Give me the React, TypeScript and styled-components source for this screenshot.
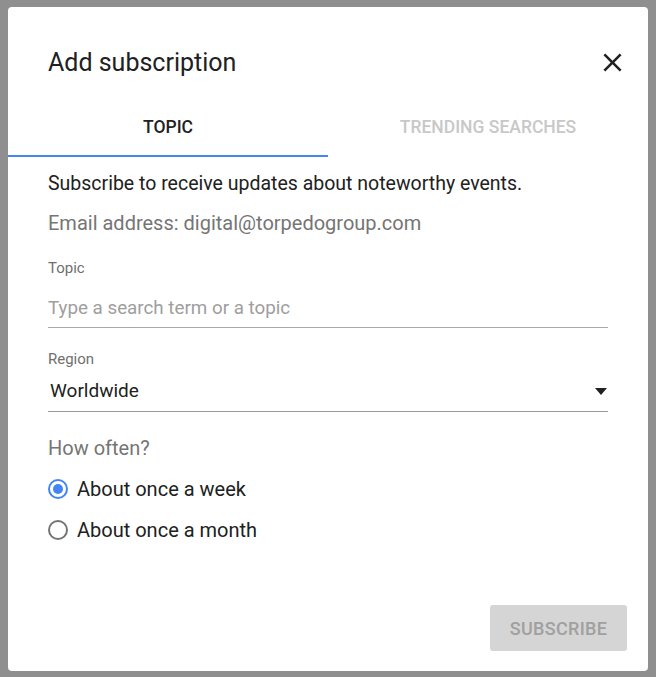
import React, { useState } from 'react';
import styled, { createGlobalStyle } from 'styled-components';

const GlobalStyle = createGlobalStyle`
  html, body {
    margin: 0;
    padding: 0;
    background: #8f8f8f;
    font-family: Roboto, "Liberation Sans", Arial, sans-serif;
  }
  * {
    box-sizing: border-box;
  }
`;

const Backdrop = styled.div`
  width: 656px;
  height: 677px;
  padding: 7px 8px 6px 8px;
`;

const Dialog = styled.div`
  width: 640px;
  height: 664px;
  background: #fff;
  border-radius: 4px;
  display: flex;
  flex-direction: column;
`;

const Header = styled.div`
  display: flex;
  align-items: center;
  justify-content: space-between;
  padding: 40px 20px 0 40px;
`;

const Title = styled.h2`
  margin: 0;
  font-size: 25px;
  line-height: 30px;
  font-weight: 400;
  color: #212121;
`;

const CloseButton = styled.button`
  width: 31px;
  height: 31px;
  padding: 0;
  border: 0;
  background: none;
  color: #212121;
  cursor: pointer;
  display: flex;
  align-items: center;
  justify-content: center;
`;

const Tabs = styled.div`
  display: flex;
  margin-top: 29px;
`;

const Tab = styled.div<{ $active?: boolean }>`
  flex: 1;
  text-align: center;
  padding: 10px 0 18px;
  font-size: 17.5px;
  line-height: 20px;
  font-weight: 500;
  text-transform: uppercase;
  color: ${({ $active }) => ($active ? '#212121' : '#c8c8c8')};
  border-bottom: 2px solid ${({ $active }) => ($active ? '#4285f4' : 'transparent')};
  cursor: pointer;
`;

const Body = styled.div`
  flex: 1;
  padding: 0 40px;
  display: flex;
  flex-direction: column;
`;

const Text = styled.p<{ $muted?: boolean; $top: number; $size?: number }>`
  margin: ${({ $top }) => $top}px 0 0;
  font-size: ${({ $size }) => $size ?? 20}px;
  line-height: 24px;
  color: ${({ $muted }) => ($muted ? '#757575' : '#212121')};
`;

const Field = styled.div<{ $top: number }>`
  margin-top: ${({ $top }) => $top}px;
  display: flex;
  flex-direction: column;
`;

const Label = styled.label`
  font-size: 15px;
  line-height: 20px;
  color: #6f6f6f;
`;

const Input = styled.input`
  margin-top: 18px;
  height: 32px;
  padding: 0 0 7px;
  border: 0;
  border-bottom: 1px solid #a8a8a8;
  outline: none;
  font-family: inherit;
  font-size: 18.8px;
  line-height: 24px;
  color: #212121;
  &::placeholder {
    color: #9e9e9e;
  }
`;

const Select = styled.div`
  margin-top: 10px;
  height: 33px;
  padding: 0 0 8px 2px;
  border-bottom: 1px solid #9a9a9a;
  display: flex;
  align-items: center;
  justify-content: space-between;
  font-size: 19px;
  line-height: 24px;
  color: #212121;
  cursor: pointer;
`;

const Caret = styled.span`
  width: 0;
  height: 0;
  margin-right: 1px;
  border-left: 6px solid transparent;
  border-right: 6px solid transparent;
  border-top: 7px solid #212121;
`;

const Options = styled.div`
  margin-top: 17px;
  display: flex;
  flex-direction: column;
  gap: 17px;
`;

const Option = styled.label`
  display: flex;
  align-items: center;
  gap: 9px;
  font-size: 20px;
  line-height: 24px;
  color: #212121;
  cursor: pointer;
`;

const Radio = styled.span<{ $checked: boolean }>`
  width: 20px;
  height: 20px;
  border-radius: 50%;
  border: 2px solid ${({ $checked }) => ($checked ? '#4285f4' : '#757575')};
  display: flex;
  align-items: center;
  justify-content: center;
  &::after {
    content: '';
    width: 10px;
    height: 10px;
    border-radius: 50%;
    background: ${({ $checked }) => ($checked ? '#4285f4' : 'transparent')};
  }
`;

const Footer = styled.div`
  display: flex;
  justify-content: flex-end;
  padding: 0 21px 20px;
`;

const SubmitButton = styled.button`
  width: 137px;
  height: 46px;
  border: 0;
  border-radius: 3px;
  background: #d5d5d5;
  color: #a0a0a0;
  font-family: inherit;
  font-size: 18px;
  font-weight: 500;
  letter-spacing: 0.3px;
  text-transform: uppercase;
`;

const CloseIcon = () => (
  <svg width="31" height="31" viewBox="0 0 24 24" fill="currentColor">
    <path d="M19 6.41L17.59 5 12 10.59 6.41 5 5 6.41 10.59 12 5 17.59 6.41 19 12 13.41 17.59 19 19 17.59 13.41 12z" />
  </svg>
);

const frequencies = ['About once a week', 'About once a month'];

const App = () => {
  const [tab, setTab] = useState(0);
  const [frequency, setFrequency] = useState(0);

  return (
    <>
      <GlobalStyle />
      <Backdrop>
        <Dialog>
          <Header>
            <Title>Add subscription</Title>
            <CloseButton aria-label="Close">
              <CloseIcon />
            </CloseButton>
          </Header>
          <Tabs>
            <Tab $active={tab === 0} onClick={() => setTab(0)}>
              Topic
            </Tab>
            <Tab $active={tab === 1} onClick={() => setTab(1)}>
              Trending searches
            </Tab>
          </Tabs>
          <Body>
            <Text $top={15} $size={19.5}>
              Subscribe to receive updates about noteworthy events.
            </Text>
            <Text $muted $top={15}>
              Email address: digital@torpedogroup.com
            </Text>
            <Field $top={23}>
              <Label>Topic</Label>
              <Input placeholder="Type a search term or a topic" />
            </Field>
            <Field $top={21}>
              <Label>Region</Label>
              <Select>
                Worldwide
                <Caret />
              </Select>
            </Field>
            <Text $muted $top={24}>
              How often?
            </Text>
            <Options>
              {frequencies.map((label, index) => (
                <Option key={label} onClick={() => setFrequency(index)}>
                  <Radio $checked={frequency === index} />
                  {label}
                </Option>
              ))}
            </Options>
          </Body>
          <Footer>
            <SubmitButton disabled>Subscribe</SubmitButton>
          </Footer>
        </Dialog>
      </Backdrop>
    </>
  );
};

export default App;
